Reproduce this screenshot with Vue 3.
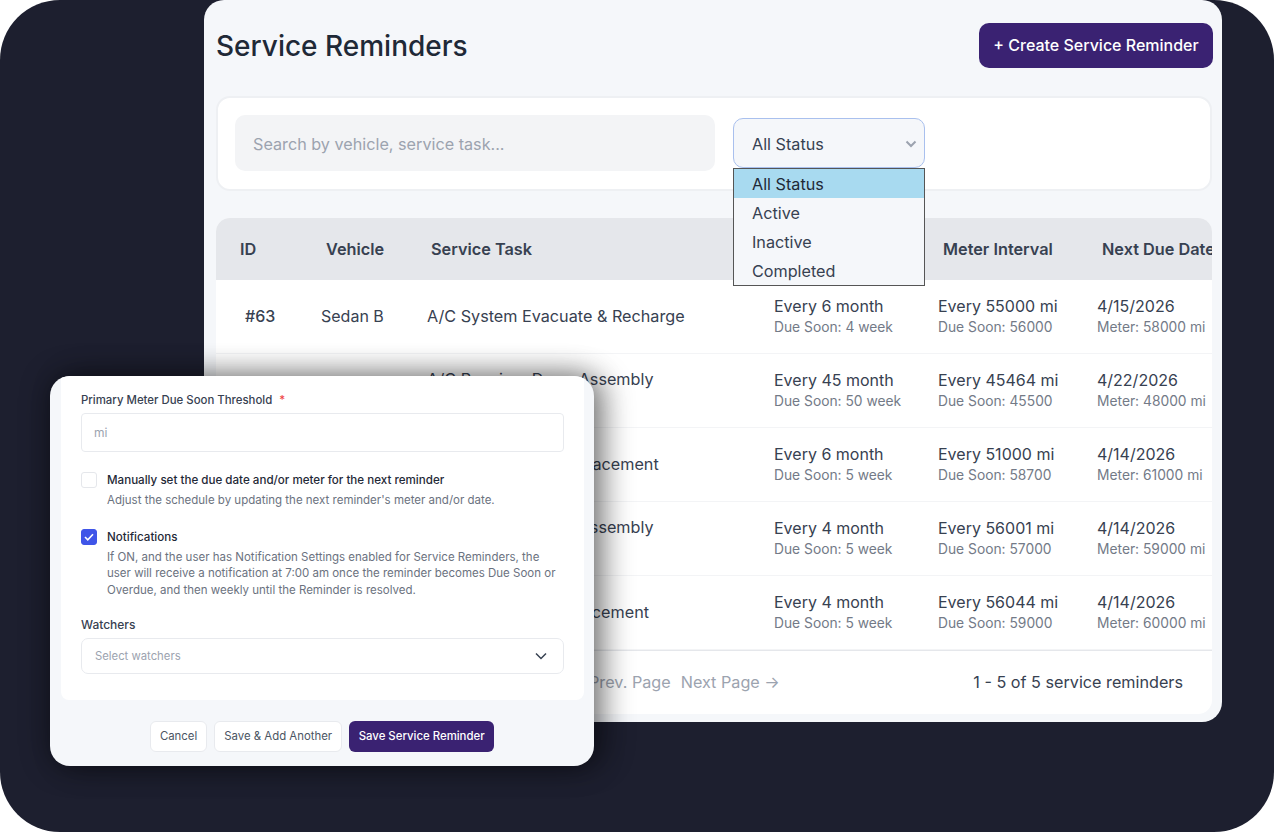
<template>
  <div class="panel">
    <div class="app-window">
      <div class="page-head">
        <h1>Service Reminders</h1>
        <button class="btn-create">+ Create Service Reminder</button>
      </div>

      <div class="filters">
        <input class="search" type="text" placeholder="Search by vehicle, service task..." />
        <div class="status-wrap">
          <div class="status-select">
            <span>All Status</span>
            <svg width="12" height="8" viewBox="0 0 12 8"><path d="M1.5 1.5 6 6l4.5-4.5" fill="none" stroke="#9ca3af" stroke-width="2"/></svg>
          </div>
          <ul class="status-menu">
            <li v-for="(opt, i) in statuses" :key="opt" :class="{ selected: i === 0 }">{{ opt }}</li>
          </ul>
        </div>
      </div>

      <div class="table-card">
        <div class="table-head">
          <div v-for="h in headers" :key="h">{{ h }}</div>
        </div>
        <div v-for="r in rows" :key="r.id" class="table-row">
          <div class="cell-id">{{ r.id }}</div>
          <div>{{ r.vehicle }}</div>
          <div class="cell-task">{{ r.task }}</div>
          <div>{{ r.time }}<small>{{ r.timeSoon }}</small></div>
          <div>{{ r.meter }}<small>{{ r.meterSoon }}</small></div>
          <div>{{ r.date }}<small>{{ r.dateMeter }}</small></div>
        </div>
        <div class="table-foot">
          <div class="pager"><span>← Prev. Page</span><span>Next Page →</span></div>
          <div class="count">1 - 5 of 5 service reminders</div>
        </div>
      </div>
    </div>

    <div class="modal">
      <div class="modal-body">
        <label class="field-label">Primary Meter Due Soon Threshold <em>*</em></label>
        <input class="field-input" type="text" placeholder="mi" />

        <div class="check-row first">
          <span class="box"></span>
          <div>
            <div class="check-title">Manually set the due date and/or meter for the next reminder</div>
            <p>Adjust the schedule by updating the next reminder's meter and/or date.</p>
          </div>
        </div>

        <div class="check-row second">
          <span class="box checked">
            <svg width="10" height="8" viewBox="0 0 10 8"><path d="M1 4l2.8 2.8L9 1.3" fill="none" stroke="#fff" stroke-width="1.6"/></svg>
          </span>
          <div>
            <div class="check-title">Notifications</div>
            <p>If ON, and the user has Notification Settings enabled for Service Reminders, the user will receive a notification at 7:00 am once the reminder becomes Due Soon or Overdue, and then weekly until the Reminder is resolved.</p>
          </div>
        </div>

        <label class="field-label watchers">Watchers</label>
        <div class="watch-select">
          <span>Select watchers</span>
          <svg width="12" height="8" viewBox="0 0 12 8"><path d="M1 1.5 6 6.5l5-5" fill="none" stroke="#374151" stroke-width="1.5"/></svg>
        </div>
      </div>
      <div class="modal-foot">
        <button class="btn-light">Cancel</button>
        <button class="btn-light">Save &amp; Add Another</button>
        <button class="btn-save">Save Service Reminder</button>
      </div>
    </div>
  </div>
</template>

<script setup>
const statuses = ['All Status', 'Active', 'Inactive', 'Completed']
const headers = ['ID', 'Vehicle', 'Service Task', 'Time Interval', 'Meter Interval', 'Next Due Date']
const rows = [
  { id: '#63', vehicle: 'Sedan B', task: 'A/C System Evacuate & Recharge', time: 'Every 6 month', timeSoon: 'Due Soon: 4 week', meter: 'Every 55000 mi', meterSoon: 'Due Soon: 56000', date: '4/15/2026', dateMeter: 'Meter: 58000 mi' },
  { id: '#62', vehicle: 'Sedan A', task: 'A/C Receiver Dryer Assembly Replacement', time: 'Every 45 month', timeSoon: 'Due Soon: 50 week', meter: 'Every 45464 mi', meterSoon: 'Due Soon: 45500', date: '4/22/2026', dateMeter: 'Meter: 48000 mi' },
  { id: '#61', vehicle: 'Truck C', task: 'A/C Compressor Replacement', time: 'Every 6 month', timeSoon: 'Due Soon: 5 week', meter: 'Every 51000 mi', meterSoon: 'Due Soon: 58700', date: '4/14/2026', dateMeter: 'Meter: 61000 mi' },
  { id: '#60', vehicle: 'Truck A', task: 'A/C Receiver Dryer Assembly Inspection', time: 'Every 4 month', timeSoon: 'Due Soon: 5 week', meter: 'Every 56001 mi', meterSoon: 'Due Soon: 57000', date: '4/14/2026', dateMeter: 'Meter: 59000 mi' },
  { id: '#59', vehicle: 'Van A', task: 'A/C Condenser Replacement', time: 'Every 4 month', timeSoon: 'Due Soon: 5 week', meter: 'Every 56044 mi', meterSoon: 'Due Soon: 59000', date: '4/14/2026', dateMeter: 'Meter: 60000 mi' },
]
</script>

<style>
html, body { background: #fff; }
</style>

<style scoped>
.panel { position: relative; width: 1274px; height: 832px; background: #1d1f2f; border-radius: 60px; overflow: hidden; font-family: Inter, "Liberation Sans", sans-serif; color: #374151; }

.app-window { position: absolute; left: 204px; top: 0; width: 1018px; height: 722px; box-sizing: border-box; padding: 0 10px 8px 12px; background: #f5f7fa; border-radius: 20px; display: flex; flex-direction: column; }
.page-head { display: flex; justify-content: space-between; align-items: center; height: 91px; flex: none; }
h1 { margin: 0; font-size: 28px; font-weight: 500; color: #1f2937; }
.btn-create { width: 234px; height: 45px; margin-right: -1px; padding: 0 0 1px; border: 0; border-radius: 10px; background: #3a2272; color: #fff; font: 500 16px Inter, sans-serif; }

.filters { position: relative; z-index: 2; display: flex; align-items: center; gap: 18px; height: 95px; flex: none; margin-top: 5px; box-sizing: border-box; padding: 0 17px 1px; background: #fff; border: 2px solid #eef0f3; border-radius: 14px; }
.search { width: 480px; height: 56px; box-sizing: border-box; padding: 2px 18px 0; border: 0; border-radius: 10px; background: #f3f4f6; font: 16.2px Inter, sans-serif; outline: none; }
.search::placeholder { color: #9ca3af; }
.status-wrap { position: relative; }
.status-select { display: flex; align-items: center; justify-content: space-between; width: 192px; height: 50px; box-sizing: border-box; padding: 1px 7px 0 18px; border: 1px solid #a9c0ee; border-radius: 10px; background: #f5f7fa; font-size: 16.2px; }
.status-menu { position: absolute; left: 0; top: 50px; width: 192px; box-sizing: border-box; margin: 0; padding: 0; list-style: none; background: #f5f7fa; border: 1px solid #555; font-size: 16.2px; }
.status-menu li { height: 29px; line-height: 31px; padding-left: 18px; }
.status-menu li.selected { background: #a8daf0; color: #1f2937; }

.table-card { flex: 1; margin-top: 27px; background: #fff; border-radius: 14px; overflow: hidden; }
.table-head { display: grid; grid-template-columns: 86px 105px 512px 159px 1fr; height: 62px; align-items: center; padding-left: 24px; background: #e5e7eb; font-weight: 600; font-size: 16.3px; white-space: nowrap; }
.table-head div:nth-child(4) { display: none; }
.table-row { display: grid; grid-template-columns: 76px 106px 347px 164px 159px 1fr; height: 74px; align-items: center; padding: 0 0 2px 29px; box-sizing: border-box; border-bottom: 1px solid #f3f4f6; font-size: 16px; white-space: nowrap; }
.table-row small { display: block; margin-top: 3px; font-size: 13.8px; color: #737a87; }
.cell-id { font-weight: 500; }
.cell-task { white-space: normal; width: 300px; font-size: 16.2px; line-height: 22px; }
.table-foot { display: flex; justify-content: space-between; align-items: center; height: 62px; padding: 0 29px 0 0; border-top: 1px solid #e5e7eb; font-size: 16.2px; }
.pager { display: flex; gap: 10px; margin-left: 353px; color: #9ca3af; }

.modal { position: absolute; z-index: 3; left: 50px; top: 376px; width: 544px; height: 390px; display: flex; flex-direction: column; box-sizing: border-box; background: #f5f7fa; border-radius: 20px; box-shadow: 0 0 30px rgba(0, 0, 0, .45), 12px 0 30px rgba(0, 0, 0, .3); overflow: hidden; }
.modal-body { height: 324px; box-sizing: border-box; margin: 0 10px 0 11px; padding: 16px 20px 0; background: #fff; border-radius: 0 0 8px 8px; }
.field-label { display: block; font-size: 11.4px; line-height: 16px; font-weight: 500; }
.field-label em { margin-left: 4px; color: #ef4444; font-style: normal; }
.field-input { display: block; width: 100%; height: 39px; box-sizing: border-box; margin-top: 5px; padding: 0 12px; border: 1.5px solid #e8eaee; border-radius: 4px; font: 12px Inter, sans-serif; outline: none; }
.field-input::placeholder { color: #9ca3af; }
.check-row { display: flex; gap: 10px; }
.check-row.first { margin-top: 20px; }
.check-row.second { margin-top: 20px; }
.box { display: flex; align-items: center; justify-content: center; flex: none; width: 16px; height: 16px; box-sizing: border-box; border: 1.5px solid #e5e7eb; border-radius: 3px; background: #fff; }
.box.checked { background: #3f55e8; border-color: #3f55e8; }
.check-title { font-size: 11.6px; line-height: 16px; font-weight: 500; color: #1f2937; }
.check-row p { margin: 4px 0 0; font-size: 11.5px; line-height: 16.7px; color: #6b7280; }
.watchers { margin-top: 18px; font-size: 12px; }
.watch-select { display: flex; align-items: center; justify-content: space-between; height: 36px; box-sizing: border-box; margin-top: 5px; padding: 0 16px 0 13px; border: 1.5px solid #e8eaee; border-radius: 7px; font-size: 11.3px; color: #9ca3af; }
.modal-foot { display: flex; justify-content: center; align-items: center; gap: 7px; flex: 1; padding-top: 6px; box-sizing: border-box; }
.btn-light, .btn-save { height: 31px; padding: 0 9px; border-radius: 6px; font: 11.4px Inter, sans-serif; }
.btn-light { background: #fff; border: 1.5px solid #e8eaee; color: #4b5563; }
.btn-save { padding: 0 9.5px; background: #3a2272; border: 0; color: #fff; font-weight: 500; }
</style>
